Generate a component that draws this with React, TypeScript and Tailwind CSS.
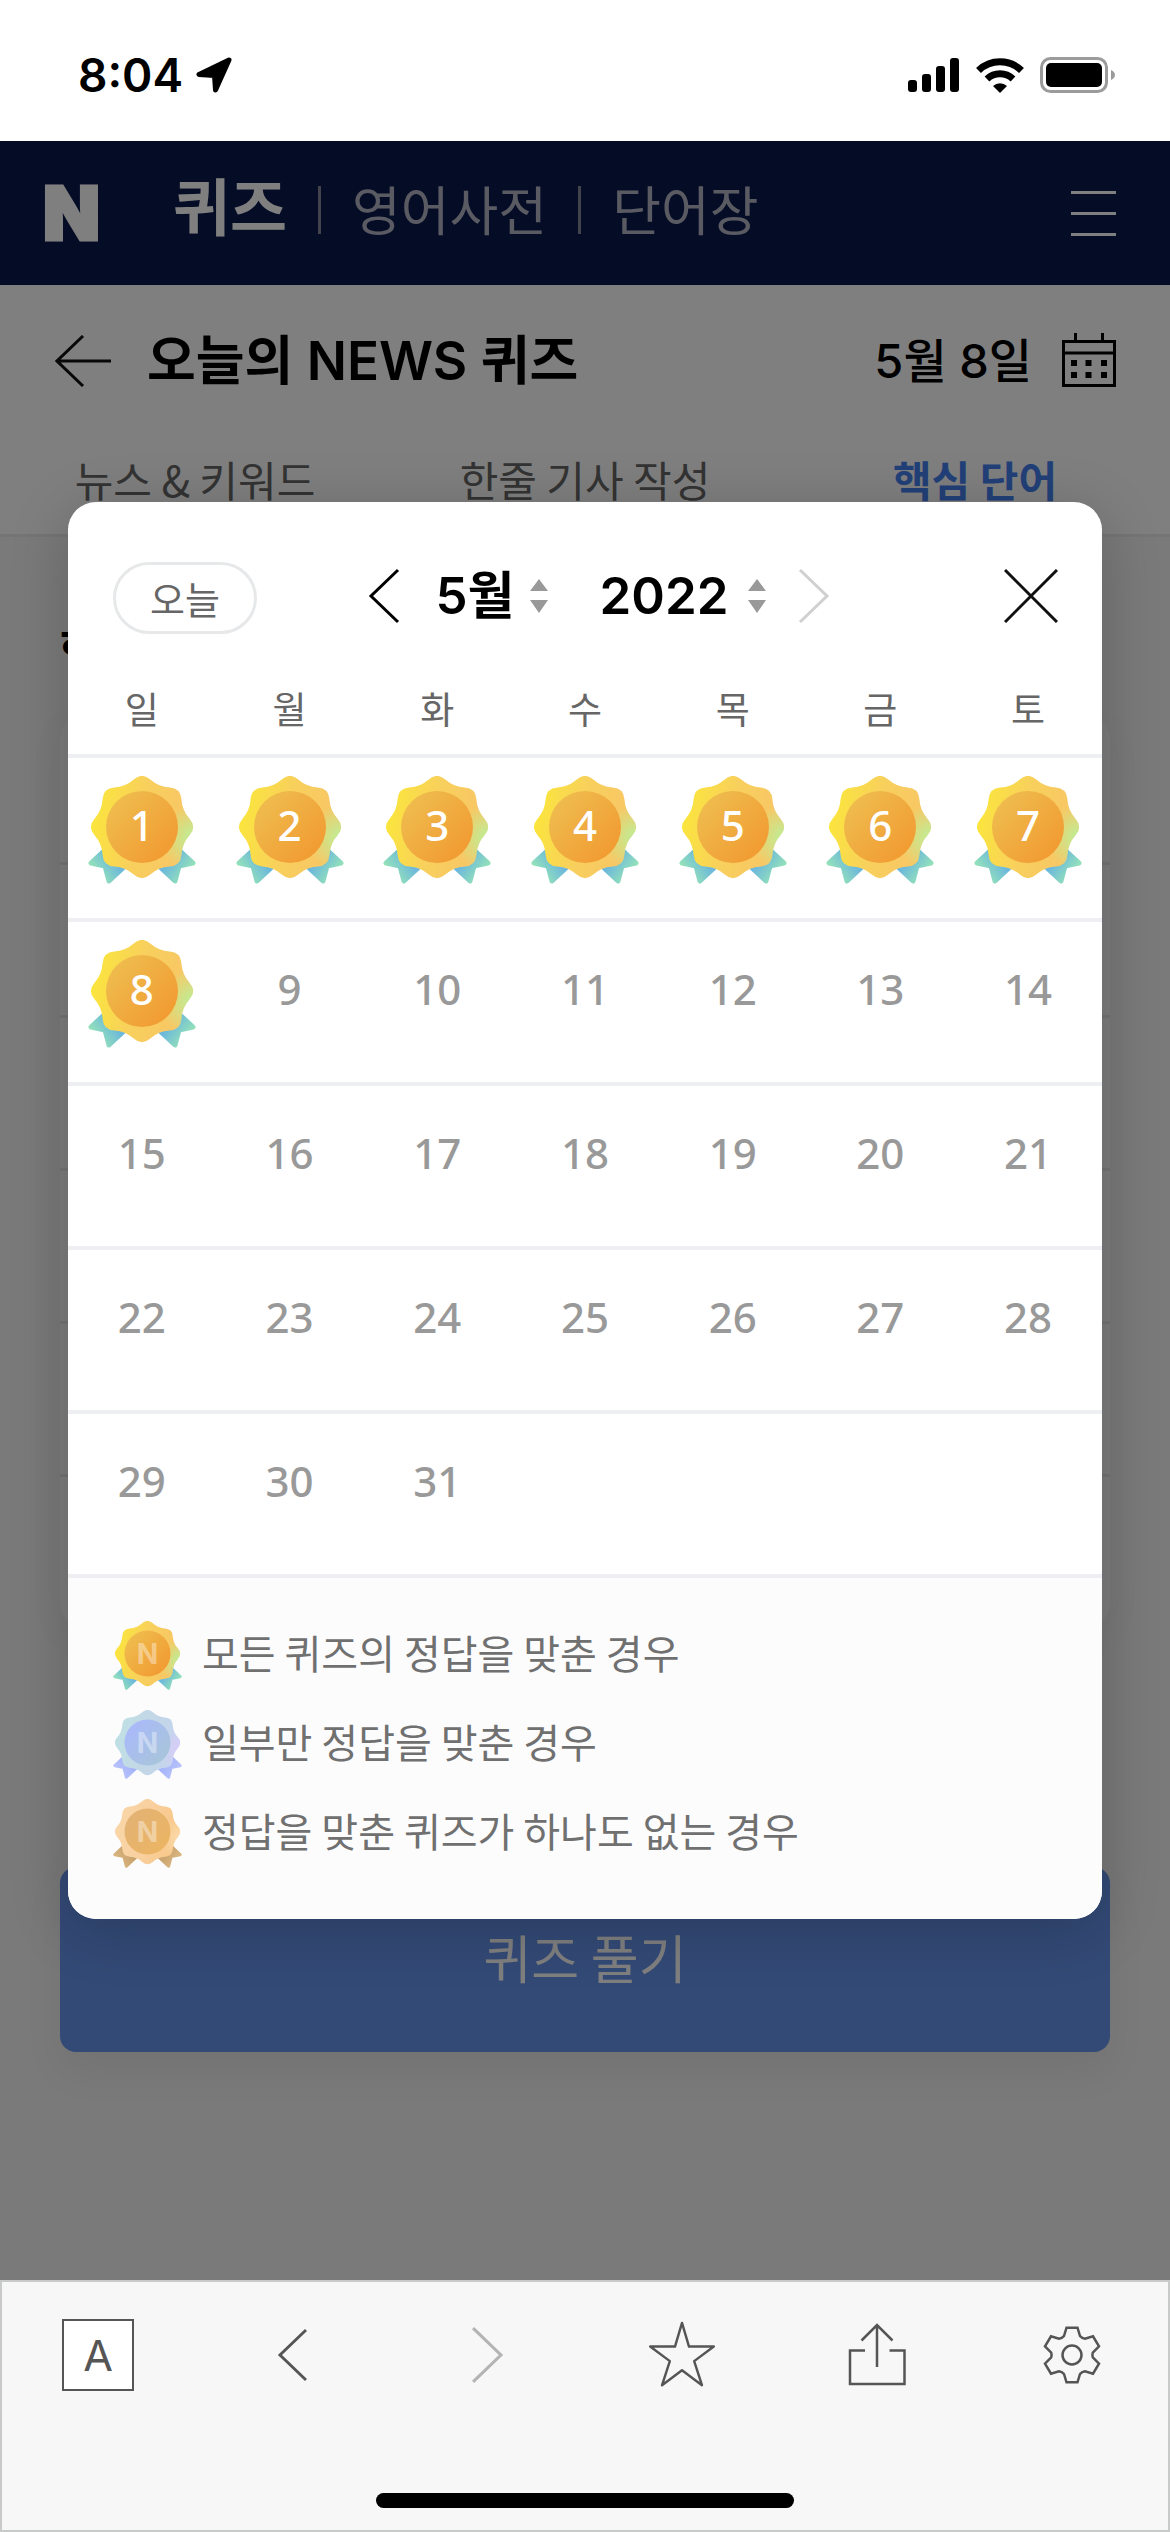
import { useState } from "react"

type Tone = "gold" | "blue" | "brown"

const WEEKDAYS = ["일", "월", "화", "수", "목", "금", "토"]
const MONTHS = [1, 2, 3, 4, 5, 6, 7, 8, 9, 10, 11, 12]
const YEARS = [2020, 2021, 2022]
const SOLVED_UNTIL = 8

const LEGEND: { tone: Tone; label: string }[] = [
    { tone: "gold", label: "모든 퀴즈의 정답을 맞춘 경우" },
    { tone: "blue", label: "일부만 정답을 맞춘 경우" },
    { tone: "brown", label: "정답을 맞춘 퀴즈가 하나도 없는 경우" },
]

const TONES = {
    gold: { petal: ["#fbe63c", "#f8d05c", "#f8c468"], glow: "#b9f29a", disc: ["#efbd4e", "#f19d34"], ribbon: ["#6cb8dc", "#9ae8b4"] },
    blue: { petal: ["#bfe0e4", "#c3d8e6", "#c4d3ee"], glow: "#dccbfa", disc: ["#a9b9fb", "#a8c4dc"], ribbon: ["#a5b4fa", "#bcc6fb"] },
    brown: { petal: ["#f9d6a8", "#f9d0a0", "#f8c684"], glow: "#fbdcae", disc: ["#e3b274", "#ebb565"], ribbon: ["#c9a26c", "#dcb985"] },
}

// eight soft petals round (54, 51)
function petalPath() {
    const pts = Array.from({ length: 16 }, (_, i) => {
        const r = i % 2 === 0 ? 54.8 : 43.4
        const a = (i * Math.PI) / 8 - Math.PI / 2
        return [54 + r * Math.cos(a), 51 + r * Math.sin(a)]
    })
    const mid = (a: number[], b: number[]) => `${((a[0] + b[0]) / 2).toFixed(2)} ${((a[1] + b[1]) / 2).toFixed(2)}`
    let d = `M${mid(pts[15], pts[0])}`
    pts.forEach((p, i) => {
        d += `Q${p[0].toFixed(2)} ${p[1].toFixed(2)} ${mid(p, pts[(i + 1) % 16])}`
    })
    return d + "Z"
}
const PETALS = petalPath()

function Medal({ id, tone, mark, className }: { id: string; tone: Tone; mark?: boolean; className: string }) {
    const c = TONES[tone]
    return (
        <svg viewBox="0 0 108 108" className={className} aria-hidden="true">
            <defs>
                <linearGradient id={`${id}-petal`} x1="0" y1="0.4" x2="1" y2="0.6">
                    <stop offset="0" stopColor={c.petal[0]} />
                    <stop offset="0.45" stopColor={c.petal[1]} />
                    <stop offset="1" stopColor={c.petal[2]} />
                </linearGradient>
                <radialGradient id={`${id}-glow`} gradientUnits="userSpaceOnUse" cx="106" cy="62" r="34">
                    <stop offset="0" stopColor={c.glow} />
                    <stop offset="1" stopColor={c.glow} stopOpacity="0" />
                </radialGradient>
                <linearGradient id={`${id}-disc`} x1="0.1" y1="0.1" x2="0.85" y2="0.8">
                    <stop offset="0" stopColor={c.disc[0]} />
                    <stop offset="1" stopColor={c.disc[1]} />
                </linearGradient>
                <linearGradient id={`${id}-ribbon`} gradientUnits="userSpaceOnUse" x1="30" y1="82" x2="6" y2="100">
                    <stop offset="0.15" stopColor={c.ribbon[0]} />
                    <stop offset="1" stopColor={c.ribbon[1]} />
                </linearGradient>
            </defs>
            <g fill={`url(#${id}-ribbon)`} stroke={`url(#${id}-ribbon)`} strokeWidth="5" strokeLinejoin="round">
                <path d="M16 75L3 87L17 90L21 105L36 91Z" />
                <path d="M16 75L3 87L17 90L21 105L36 91Z" transform="matrix(-1 0 0 1 108 0)" />
            </g>
            <path d={PETALS} fill={`url(#${id}-petal)`} />
            <path d={PETALS} fill={`url(#${id}-glow)`} />
            <circle cx="54" cy="51" r="36" fill={`url(#${id}-disc)`} />
            {mark && (
                <text x="54" y="67" textAnchor="middle" fill="#fff" fillOpacity="0.4" fontSize="44" fontWeight="700" fontFamily="Inter, sans-serif">
                    N
                </text>
            )}
        </svg>
    )
}

function Chevron({ className, flip }: { className: string; flip?: boolean }) {
    return (
        <svg viewBox="0 0 32 56" className={className} fill="none" stroke="currentColor" strokeWidth="3" aria-hidden="true">
            <path d={flip ? "M2 2L29 28L2 54" : "M30 2L3 28L30 54"} />
        </svg>
    )
}

function Spinner() {
    return (
        <svg viewBox="0 0 18 34" className="w-[18px] h-[34px] fill-[#999]" aria-hidden="true">
            <path d="M9 0L18 12H0ZM9 34L18 21H0Z" />
        </svg>
    )
}

function StatusBar() {
    return (
        <div className="flex items-center justify-between h-[141px] pl-[78px] pr-[54px] pt-[8px] bg-white text-black">
            <div className="flex items-center gap-[12px]">
                <span className="font-[Inter,sans-serif] text-[46px] leading-[56px] font-semibold">8:04</span>
                <svg viewBox="0 0 38 38" className="w-[38px] h-[38px]" aria-hidden="true">
                    <path d="M34 4L4 18.500L19.500 19.500L20.500 34Z" fill="currentColor" stroke="currentColor" strokeWidth="5" strokeLinejoin="round" />
                </svg>
            </div>
            <div className="flex items-center gap-[16px]">
                <svg viewBox="0 0 52 36" className="w-[52px] h-[36px]" aria-hidden="true">
                    <rect x="0" y="23" width="9" height="12" rx="3" />
                    <rect x="14" y="17" width="9" height="18" rx="3" />
                    <rect x="28" y="9" width="9" height="26" rx="3" />
                    <rect x="42" y="1" width="9" height="34" rx="3" />
                </svg>
                <svg viewBox="0 0 48 36" className="w-[48px] h-[36px]" fill="none" stroke="currentColor" strokeWidth="7" aria-hidden="true">
                    <path d="M2.500 13.500A31 31 0 0 1 45.500 13.500" />
                    <path d="M11 22A19 19 0 0 1 37 22" />
                    <path d="M24 36L17 29A10 10 0 0 1 31 29Z" fill="currentColor" stroke="none" />
                </svg>
                <svg viewBox="0 0 76 36" className="w-[76px] h-[36px]" aria-hidden="true">
                    <rect x="1.500" y="1.500" width="65" height="33" rx="9" fill="none" stroke="#9b9b9b" strokeWidth="3" />
                    <rect x="6" y="6" width="56" height="24" rx="5" />
                    <path d="M71 13Q75 15 75 18T71 23Z" fill="#9b9b9b" />
                </svg>
            </div>
        </div>
    )
}

function TopNav() {
    return (
        <header className="flex items-center justify-between h-[144px] pl-[43px] pr-[54px] bg-[#0a184c] text-white">
            <nav className="flex items-center pb-[10px]">
                <a href="#" className="w-[130px] pt-[10px] font-[Inter,sans-serif] text-[74px] leading-[80px] font-black [-webkit-text-stroke:3px_white]" aria-label="N">
                    N
                </a>
                <a href="#" className="pb-[8px] text-[62px] leading-[80px] font-bold">퀴즈</a>
                <span className="w-[3px] h-[48px] mt-[4px] mx-[31px] bg-[#84869a]" />
                <a href="#" className="text-[53px] leading-[80px] text-[#b4b6c4]">영어사전</a>
                <span className="w-[3px] h-[48px] mt-[4px] mx-[31px] bg-[#84869a]" />
                <a href="#" className="text-[53px] leading-[80px] text-[#b4b6c4]">단어장</a>
            </nav>
            <button type="button" aria-label="메뉴" className="flex flex-col gap-[18px]">
                <span className="w-[45px] h-[3px] bg-white" />
                <span className="w-[45px] h-[3px] bg-white" />
                <span className="w-[45px] h-[3px] bg-white" />
            </button>
        </header>
    )
}

function PageHead() {
    return (
        <div className="bg-white border-b-[3px] border-[#e8eaed]">
            <div className="flex items-center justify-between h-[143px] pl-[55px] pr-[54px] pt-[8px] font-[Inter,'Noto_Sans_CJK_KR',sans-serif] text-black">
                <div className="flex items-center gap-[36px]">
                    <button type="button" aria-label="뒤로">
                        <svg viewBox="0 0 56 52" className="w-[56px] h-[52px]" fill="none" stroke="#111" strokeWidth="3" aria-hidden="true">
                            <path d="M28 1L2 26L28 51M2 26H56" />
                        </svg>
                    </button>
                    <h1 className="text-[53px] leading-[72px] font-semibold">오늘의 NEWS 퀴즈</h1>
                </div>
                <button type="button" className="flex items-center gap-[30px] text-[47px] leading-[72px] font-medium">
                    5월 8일
                    <svg viewBox="0 0 54 56" className="w-[54px] h-[56px]" fill="none" stroke="currentColor" strokeWidth="3" aria-hidden="true">
                        <path d="M1.500 8.500H52.500V52.500H1.500ZM1.500 20H52.500M13.500 0V8M40.500 0V8" />
                        <path d="M9 30H15M23.500 30H29.500M39 30H45M9 42H15M23.500 42H29.500M39 42H45" strokeWidth="6" />
                    </svg>
                </button>
            </div>
            <nav className="grid grid-cols-3 h-[106px] text-center text-[42px] leading-[102px] text-[#666]">
                <a href="#">뉴스 &amp; 키워드</a>
                <a href="#">한줄 기사 작성</a>
                <a href="#" className="font-bold text-[#4480f0]">핵심 단어</a>
            </nav>
        </div>
    )
}

function CalendarDialog() {
    const [month, setMonth] = useState(5)
    const [year, setYear] = useState(2022)
    const first = new Date(year, month - 1, 1).getDay()
    const total = new Date(year, month, 0).getDate()
    const weeks: number[][] = []
    for (let start = 1 - first; start <= total; start += 7) {
        weeks.push(WEEKDAYS.map((_, i) => start + i))
    }

    return (
        <div role="dialog" aria-label="달력" className="w-full rounded-[28px] overflow-hidden bg-white shadow-[0_10px_60px_rgba(0,0,0,0.2)]">
            <div className="flex items-center justify-between h-[188px] pl-[45px] pr-[44px]">
                <button type="button" className="w-[144px] h-[72px] mt-[4px] rounded-full border-[3px] border-[#e6e8e9] text-[38px] leading-[62px] text-[#666]">
                    오늘
                </button>
                <div className="flex items-center font-[Inter,'Noto_Sans_CJK_KR',sans-serif] text-[51px] font-semibold text-black">
                    <button type="button" aria-label="이전 달" className="mr-[36px]" onClick={() => setMonth(Math.max(1, month - 1))}>
                        <Chevron className="w-[32px] h-[56px]" />
                    </button>
                    <select aria-label="월" value={month} onChange={(e) => setMonth(Number(e.target.value))} className="appearance-none w-[80px] h-[76px] bg-transparent">
                        {MONTHS.map((m) => (
                            <option key={m} value={m}>{m}월</option>
                        ))}
                    </select>
                    <span className="ml-[14px] mr-[52px]">
                        <Spinner />
                    </span>
                    <select aria-label="연도" value={year} onChange={(e) => setYear(Number(e.target.value))} className="appearance-none w-[134px] h-[76px] bg-transparent">
                        {YEARS.map((y) => (
                            <option key={y} value={y}>{y}</option>
                        ))}
                    </select>
                    <span className="ml-[14px] mr-[32px]">
                        <Spinner />
                    </span>
                    <button type="button" aria-label="다음 달" disabled className="text-[#d0d0d0]">
                        <Chevron flip className="w-[32px] h-[56px]" />
                    </button>
                </div>
                <button type="button" aria-label="닫기" className="ml-[64px]">
                    <svg viewBox="0 0 54 54" className="w-[54px] h-[54px]" fill="none" stroke="#111" strokeWidth="3" aria-hidden="true">
                        <path d="M1 1L53 53M53 1L1 53" />
                    </svg>
                </button>
            </div>
            <table className="w-full table-fixed border-collapse">
                <thead>
                    <tr className="border-b-[4px] border-[#edeff2]">
                        {WEEKDAYS.map((d) => (
                            <th key={d} scope="col" className="h-[64px] p-0 pb-[28px] text-[37px] leading-[36px] font-normal text-[#666]">{d}</th>
                        ))}
                    </tr>
                </thead>
                <tbody>
                    {weeks.map((week) => (
                        <tr key={week[0]} className="border-b-[4px] border-[#edeff2]">
                            {week.map((day) => {
                                const solved = day >= 1 && day <= SOLVED_UNTIL
                                return (
                                    <td key={day} className="h-[164px] p-0 align-top">
                                        {day >= 1 && day <= total && (
                                            <button type="button" className="grid w-full justify-items-center pt-[18px]">
                                                {solved && <Medal id={`day${day}`} tone="gold" className="w-[108px] h-[108px] [grid-area:1/1]" />}
                                                <span className={`[grid-area:1/1] z-[1] font-['Noto_Sans',sans-serif] text-[42px] leading-[98px] font-medium ${solved ? "text-white" : "text-[#999]"}`}>
                                                    {day}
                                                </span>
                                            </button>
                                        )}
                                    </td>
                                )
                            })}
                        </tr>
                    ))}
                </tbody>
            </table>
            <ul className="flex flex-col gap-[19px] pt-[43px] pb-[50px] pl-[45px] bg-[#fcfcfd] text-[40px] leading-[62px] text-[#707070]">
                {LEGEND.map((item) => (
                    <li key={item.tone} className="flex items-start h-[70px] gap-[20px]">
                        <Medal id={item.tone} tone={item.tone} mark className="w-[69px] h-[69px]" />
                        <span>{item.label}</span>
                    </li>
                ))}
            </ul>
        </div>
    )
}

function Toolbar() {
    const item = "flex items-center justify-center w-[72px] h-[72px]"
    return (
        <footer className="h-[252px] px-[60px] pt-[37px] border-2 border-[#c8caca] bg-[#f7f7f7] text-[#555]">
            <div className="flex justify-between">
                <button type="button" className={`${item} border-[2px] border-[#555] bg-white font-[Inter,sans-serif] text-[43px] leading-[60px]`}>A</button>
                <button type="button" aria-label="이전" className={item}>
                    <Chevron className="w-[31px] h-[54px]" />
                </button>
                <button type="button" aria-label="다음" disabled className={`${item} text-[#b4b4b4]`}>
                    <Chevron flip className="w-[33px] h-[58px]" />
                </button>
                <button type="button" aria-label="즐겨찾기" className={item}>
                    <svg viewBox="0 0 74 74" className="w-[74px] h-[74px]" fill="none" stroke="currentColor" strokeWidth="2.500" strokeLinejoin="round" aria-hidden="true">
                        <path d="M37 4L44.200 28.300H69.700L49.500 43.300L57.500 68L37 52.700L16.500 68L24.500 43.300L4.300 28.300H29.800Z" />
                    </svg>
                </button>
                <button type="button" aria-label="공유" className={item}>
                    <svg viewBox="0 0 64 68" className="w-[64px] h-[68px]" fill="none" stroke="currentColor" strokeWidth="2.500" aria-hidden="true">
                        <path d="M20 29.500H5V63H59.500V29.500H44.500M32 4V46M16.500 19.500L32 4L47.500 19.500" />
                    </svg>
                </button>
                <button type="button" aria-label="설정" className={item}>
                    <svg viewBox="0 0 60 64" className="w-[60px] h-[64px]" fill="none" stroke="currentColor" strokeWidth="2.500" aria-hidden="true">
                        <path d="M24.500 4.700H35.500L38 13Q40 15.500 43 15.700L51 13.300L57 23.300L50.800 29.700Q50 32 50.800 34.300L57 40.700L51 50.700L43 48.300Q40 48.500 38 51L35.500 59.300H24.500L22 51Q20 48.500 17 48.300L9 50.700L3 40.700L9.200 34.300Q10 32 9.200 29.700L3 23.300L9 13.300L17 15.700Q20 15.500 22 13Z" />
                        <circle cx="30" cy="32" r="9.500" />
                    </svg>
                </button>
            </div>
            <div className="w-[418px] h-[15px] mt-[102px] mx-auto rounded-full bg-black" />
        </footer>
    )
}

export default function App() {
    return (
        <div className="flex flex-col min-h-screen font-['Noto_Sans_CJK_KR',sans-serif]">
            <StatusBar />
            <main className="relative flex flex-col flex-1 bg-[#f4f4f4]">
                <TopNav />
                <PageHead />
                <section className="px-[60px] pt-[78px]">
                    <h2 className="text-[48px] leading-[64px] font-bold text-black">핵심 단어</h2>
                    <ul className="mt-[33px] rounded-[28px] bg-[#fafafa] divide-y-[3px] divide-[#e8e8e8] shadow-[0_10px_40px_rgba(0,0,0,0.04)]">
                        {[1, 2, 3, 4, 5, 6].map((row) => (
                            <li key={row} className="h-[153px]" />
                        ))}
                    </ul>
                    <button type="button" className="w-full h-[185px] mt-[237px] rounded-[16px] bg-[#6694ec] pb-[6px] text-[52px] leading-[60px] text-white shadow-[0_20px_40px_rgba(0,0,0,0.06)]">
                        퀴즈 풀기
                    </button>
                </section>
                <div className="absolute inset-0 flex items-center px-[68px] bg-black/50">
                    <CalendarDialog />
                </div>
            </main>
            <Toolbar />
        </div>
    )
}
